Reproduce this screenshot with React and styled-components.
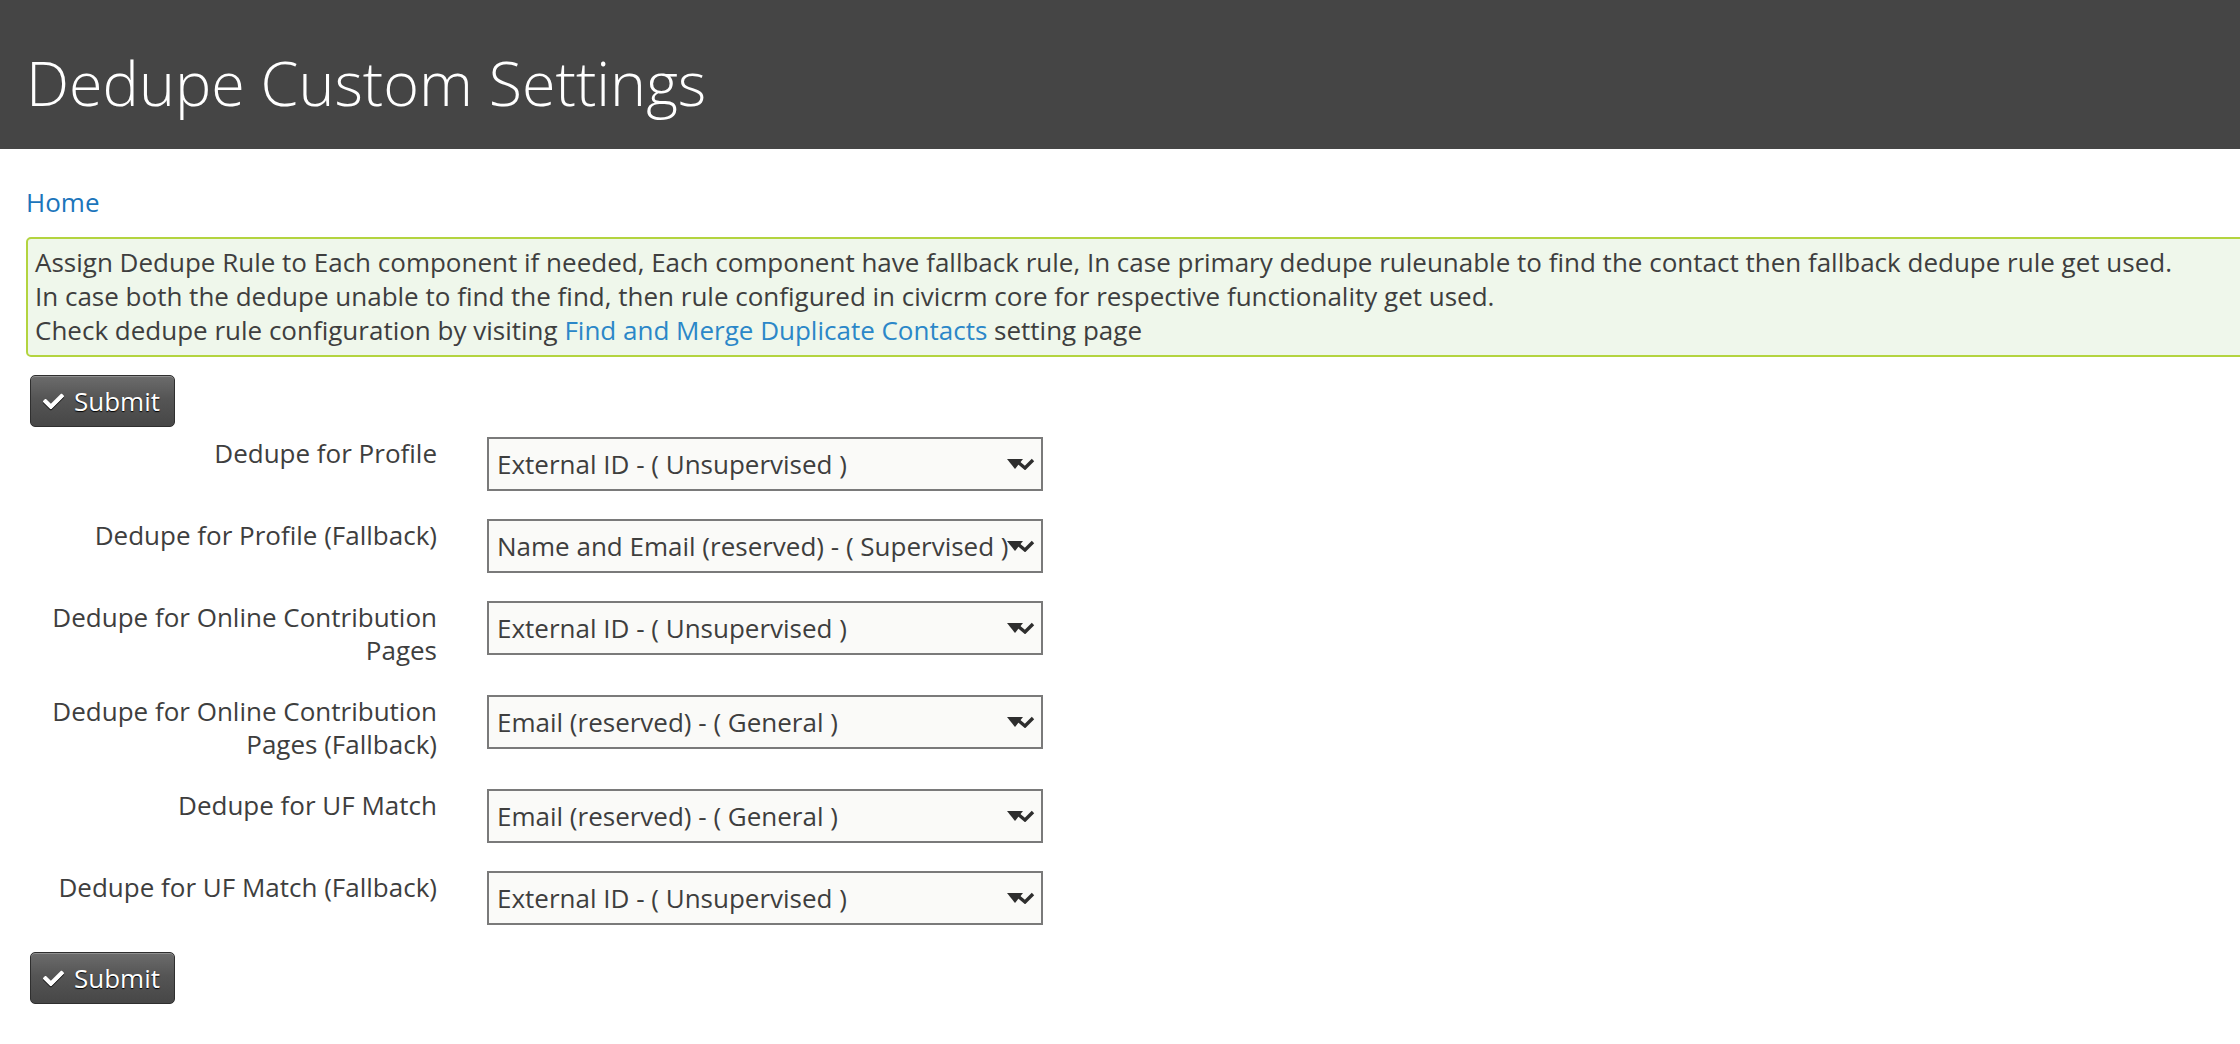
import React from 'react';
import styled, { createGlobalStyle } from 'styled-components';
import { FaCheck } from 'react-icons/fa';

const GlobalStyle = createGlobalStyle`
  body {
    margin: 0;
    background: #fff;
    font-family: "Open Sans", "Liberation Sans", sans-serif;
    font-size: 26px;
    line-height: 34px;
    color: #3e3e3e;
    overflow-x: hidden;
  }
`;

const Header = styled.header`
  height: 149px;
  box-sizing: border-box;
  padding: 46px 26px 0;
  background-color: #454545;
`;

const Title = styled.h1`
  margin: 0;
  font-size: 61px;
  line-height: 74px;
  font-weight: 300;
  color: #fff;
`;

const Page = styled.main`
  padding: 36px 0 40px 26px;
`;

const Link = styled.a`
  color: ${(p) => (p.$soft ? '#2b87c8' : '#1b75bb')};
  text-decoration: none;
`;

const Breadcrumb = styled.div`
  height: 34px;
`;

const Notice = styled.div`
  margin: 18px -40px 0 0;
  padding: 6px 8px 8px 7px;
  border: 2px solid #b3d43f;
  border-radius: 5px;
  background-color: #eff7eb;
`;

const SubmitButton = styled.button`
  display: flex;
  align-items: center;
  gap: 10px;
  margin: ${(p) => p.$margin};
  height: 52px;
  padding: 0 14px 0 12px;
  border: 1px solid #2f2f2f;
  border-radius: 5px;
  background: linear-gradient(#6c6c6c, #555 45%, #474747);
  box-shadow: inset 0 1px 0 rgba(255, 255, 255, 0.25);
  color: #fff;
  font-family: inherit;
  font-size: 26px;
  text-shadow: 0 1px 1px #000;
  cursor: pointer;

  svg {
    font-size: 21px;
    filter: drop-shadow(0 1px 0 #000);
  }
`;

const FormGrid = styled.div`
  display: grid;
  grid-template-columns: 411px 556px;
  column-gap: 50px;
  row-gap: 28px;
  margin-top: 10px;
  align-items: start;
`;

const Label = styled.label`
  text-align: right;
  line-height: 33px;
`;

const SelectWrap = styled.div`
  position: relative;
  height: 54px;
`;

const Select = styled.select`
  appearance: none;
  width: 100%;
  height: 54px;
  box-sizing: border-box;
  padding: 0 8px;
  border: 2px solid #7a7a7a;
  border-radius: 0;
  background-color: #fafaf8;
  color: #3e3e3e;
  font-family: inherit;
  font-size: 26px;
`;

const Arrow = styled.svg`
  position: absolute;
  right: 8px;
  top: 21px;
  pointer-events: none;
`;

const rows = [
  { label: 'Dedupe for Profile', value: 'External ID - ( Unsupervised )' },
  { label: 'Dedupe for Profile (Fallback)', value: 'Name and Email (reserved) - ( Supervised )' },
  { label: 'Dedupe for Online Contribution Pages', value: 'External ID - ( Unsupervised )' },
  { label: 'Dedupe for Online Contribution Pages (Fallback)', value: 'Email (reserved) - ( General )' },
  { label: 'Dedupe for UF Match', value: 'Email (reserved) - ( General )' },
  { label: 'Dedupe for UF Match (Fallback)', value: 'External ID - ( Unsupervised )' },
];

const options = [
  'External ID - ( Unsupervised )',
  'Name and Email (reserved) - ( Supervised )',
  'Email (reserved) - ( General )',
];

const SelectArrow = () => (
  <Arrow width="28" height="12" viewBox="0 0 28 12">
    <path d="M0 1 H16 L8 11 Z" fill="#2e2e2e" />
    <path d="M12 5 L18 10 L26 2" fill="none" stroke="#2e2e2e" strokeWidth="3.4" />
  </Arrow>
);

const Submit = ({ margin }) => (
  <SubmitButton type="button" $margin={margin}>
    <FaCheck />
    Submit
  </SubmitButton>
);

const App = () => (
  <>
    <GlobalStyle />
    <Header>
      <Title>Dedupe Custom Settings</Title>
    </Header>
    <Page>
      <Breadcrumb>
        <Link href="#">Home</Link>
      </Breadcrumb>
      <Notice>
        Assign Dedupe Rule to Each component if needed, Each component have fallback rule, In case primary dedupe ruleunable to find the contact then fallback dedupe rule get used.
        <br />
        In case both the dedupe unable to find the find, then rule configured in civicrm core for respective functionality get used.
        <br />
        Check dedupe rule configuration by visiting <Link $soft href="#">Find and Merge Duplicate Contacts</Link> setting page
      </Notice>
      <Submit margin="18px 0 0 4px" />
      <FormGrid>
        {rows.map((row) => (
          <React.Fragment key={row.label}>
            <Label>{row.label}</Label>
            <SelectWrap>
              <Select defaultValue={row.value}>
                {options.map((o) => (
                  <option key={o}>{o}</option>
                ))}
              </Select>
              <SelectArrow />
            </SelectWrap>
          </React.Fragment>
        ))}
      </FormGrid>
      <Submit margin="27px 0 0 4px" />
    </Page>
  </>
);

export default App;
